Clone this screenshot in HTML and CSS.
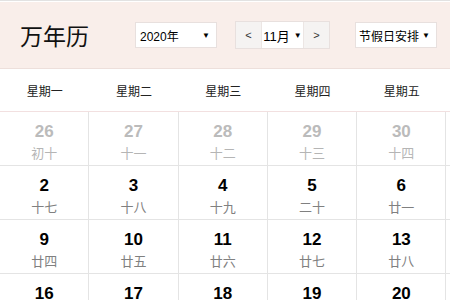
FILE: index.html
```html
<!DOCTYPE html>
<html lang="zh-CN">
<head>
    <meta charset="UTF-8">
    <title>万年历</title>
    <link rel="stylesheet" href="styles.css">
</head>
<body>
    <div class="calendar">
        <div class="cal-header">
            <h1 class="cal-title">万年历</h1>
            <div class="fake-select year-select"><span>2020年</span><span class="arrow">▼</span></div>
            <div class="month-group">
                <span class="month-btn">&lt;</span>
                <span class="month-select">11月 <span class="arrow">▼</span></span>
                <span class="month-btn">&gt;</span>
            </div>
            <div class="fake-select holiday-select"><span>节假日安排</span><span class="arrow">▼</span></div>
        </div>
        <div class="week-row">
            <div>星期一</div><div>星期二</div><div>星期三</div><div>星期四</div><div>星期五</div><div>星期六</div><div>星期日</div>
        </div>
        <div class="days" id="days"></div>
    </div>

    <script>
        var days = [
            [26, '初十', 1], [27, '十一', 1], [28, '十二', 1], [29, '十三', 1], [30, '十四', 1], [31, '十五', 1], [1, '十六', 0],
            [2, '十七', 0], [3, '十八', 0], [4, '十九', 0], [5, '二十', 0], [6, '廿一', 0], [7, '立冬', 0], [8, '廿三', 0],
            [9, '廿四', 0], [10, '廿五', 0], [11, '廿六', 0], [12, '廿七', 0], [13, '廿八', 0], [14, '廿九', 0], [15, '十月', 0],
            [16, '初二', 0], [17, '初三', 0], [18, '初四', 0], [19, '初五', 0], [20, '初六', 0], [21, '初七', 0], [22, '小雪', 0]
        ];
        var html = '';
        days.forEach(function(d) {
            html += '<div class="day' + (d[2] ? ' other' : '') + '">' +
                '<div class="day-num">' + d[0] + '</div>' +
                '<div class="day-lunar">' + d[1] + '</div></div>';
        });
        document.getElementById('days').innerHTML = html;
    </script>
</body>
</html>
```

FILE: styles.css
```css
body { margin: 0; font-family: "Liberation Sans", "Noto Sans CJK SC", sans-serif; background-color: white; overflow: hidden; }
.calendar { width: 625px; border-top: 1px solid #e2e2e2; }
.cal-header { display: flex; align-items: center; height: 66px; margin-top: 1px; padding-left: 20px; background-color: #f9eeea; border-bottom: 1px solid #eddfdb; }
.cal-title { margin: 0 46px 0 0; font-size: 23px; font-weight: normal; color: #111; }
.fake-select { display: flex; align-items: center; justify-content: space-between; height: 24px; padding: 0 6px 0 4px; background-color: white; border: 1px solid #e8e0de; font-size: 12px; color: #000; box-sizing: content-box; }
.fake-select .arrow, .month-select .arrow { font-size: 8px; }
.year-select { width: 70px; margin-right: 18px; }
.month-group { display: flex; height: 26px; border: 1px solid #e8e0de; margin-right: 25px; font-size: 13px; }
.month-btn { width: 25px; display: flex; align-items: center; justify-content: center; background-color: #f5f3f2; color: #333; font-size: 11px; }
.month-select { width: 41px; display: flex; align-items: center; justify-content: center; gap: 4px; background-color: white; border-left: 1px solid #ece6e4; border-right: 1px solid #ece6e4; }
.holiday-select { width: 71px; padding-left: 3px; }
.week-row { display: grid; grid-template-columns: repeat(7, 89.3px); height: 42px; border-bottom: 1px solid #f2e0e0; }
.week-row div { display: flex; align-items: center; justify-content: center; font-size: 12px; color: #222; padding-top: 1px; }
.days { display: grid; grid-template-columns: repeat(7, 89.3px); grid-auto-rows: 54px; }
.day { border-right: 1px solid #e4e4e4; border-bottom: 1px solid #e4e4e4; text-align: center; padding-top: 10px; box-sizing: border-box; }
.day-num { font-size: 17px; font-weight: bold; color: #000; line-height: 20px; }
.day-lunar { font-size: 13px; color: #808080; line-height: 18px; margin-top: 3px; }
.day.other .day-num { color: #bbb; }
.day.other .day-lunar { color: #b5b5b5; }
```
